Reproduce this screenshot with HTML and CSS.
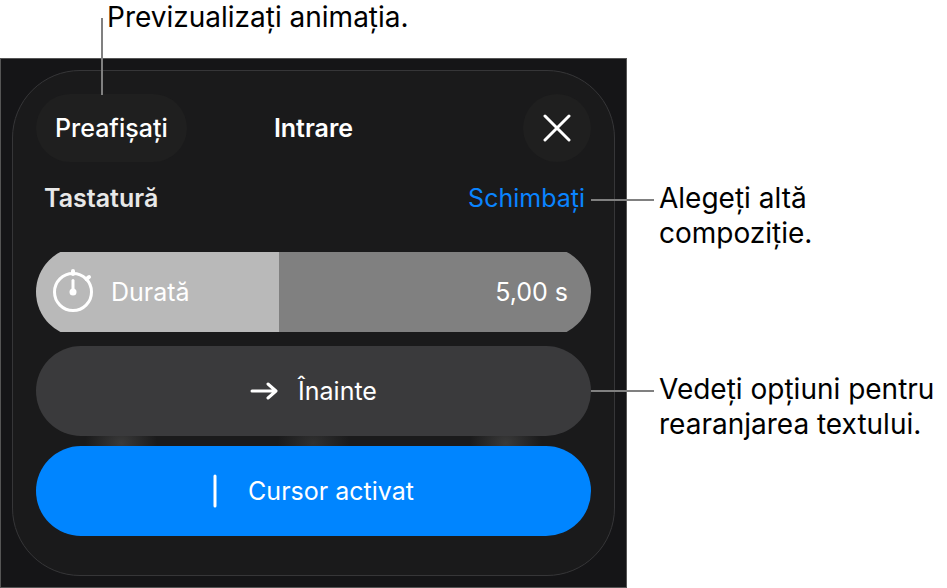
FILE: index.html
```html
<!DOCTYPE html>
<html lang="ro">
<head>
  <meta charset="UTF-8">
  <meta name="viewport" content="width=device-width, initial-scale=1.0">
  <title>Intrare</title>
  <link rel="stylesheet" href="styles.css">
</head>
<body>
  <div class="figure">
    <p class="callout callout-top">Previzualizați animația.</p>

    <div class="screen">
      <form class="panel">
        <div class="panel-header">
          <button type="button" class="preview">Preafișați</button>
          <h1>Intrare</h1>
          <button type="button" class="close" aria-label="Închideți">
            <svg width="28" height="28" viewBox="0 0 28 28">
              <path d="M2 2 L26 26 M26 2 L2 26" />
            </svg>
          </button>
        </div>

        <div class="effect">
          <h2>Tastatură</h2>
          <a href="#">Schimbați</a>
        </div>

        <div class="duration">
          <input type="range" id="duration" min="0" max="1000" value="437" style="--fill: 43.7%">
          <label for="duration">
            <svg width="42" height="48" viewBox="0 0 42 48">
              <circle cx="20" cy="24" r="18.500" />
              <path d="M20 12.500 V24" />
              <path class="knob" d="M20 3 V6 M33.500 11 L36 9" />
              <circle class="dot" cx="20" cy="24" r="3.500" />
            </svg>
            Durată
          </label>
          <output for="duration">5,00 s</output>
        </div>

        <button type="button" class="option">
          <svg width="28" height="20" viewBox="0 0 28 20">
            <path d="M2 10 H25 M18 3 L26 10 L18 17" />
          </svg>
          Înainte
        </button>

        <button type="button" class="option active">
          <svg width="4" height="34" viewBox="0 0 4 34">
            <path d="M2 2 V32" />
          </svg>
          Cursor activat
        </button>
      </form>
    </div>

    <div class="callouts">
      <p class="callout callout-side">Alegeți altă compoziție.</p>
      <p class="callout callout-side">Vedeți opțiuni pentru rearanjarea textului.</p>
    </div>
  </div>
</body>
</html>
```

FILE: styles.css
```css
* {
  box-sizing: border-box;
}
body {
  margin: 0;
  background: #fff;
  color: #000;
  font-family: Inter, "Liberation Sans", sans-serif;
}
h1, h2, p {
  margin: 0;
}
svg {
  flex: none;
  fill: none;
  stroke: #fff;
  stroke-width: 3;
  stroke-linecap: round;
  stroke-linejoin: round;
}

/* Picture and its callouts */
.figure {
  display: grid;
  grid-template-columns: minmax(0, 627px) minmax(0, 1fr);
}
.callout {
  position: relative;
  font-size: 28px;
  line-height: 35px;
}
.callout::before {
  content: "";
  position: absolute;
  background: #808080;
}
.callout-top {
  grid-column: 1 / -1;
  padding-left: 107px;
  padding-bottom: 23px;
}
.callout-top::before {
  left: 101px;
  top: 18px;
  width: 2px;
  height: 77px;
}
.callouts {
  display: flex;
  flex-direction: column;
  gap: 121px;
  padding-top: 123px;
  padding-left: 32px;
}
.callout-side::before {
  right: 100%;
  top: 18px;
  width: 63px;
  height: 2px;
  margin-right: 5px;
}

/* Dark screen */
.screen {
  padding: 11px;
  border: 1px solid #555;
  background: #151517;
}
.panel {
  display: flex;
  flex-direction: column;
  padding: 23px 23px 39px;
  border: 1px solid #363638;
  border-radius: 68px;
  background:
    radial-gradient(36px 30px at 18% 372px, #3a3a3a, transparent),
    radial-gradient(36px 30px at 50% 372px, #303030, transparent),
    radial-gradient(36px 30px at 82% 372px, #3a3a3a, transparent),
    #1a1a1b;
}
button {
  border: 0;
  padding: 0;
  color: #fff;
  font-family: inherit;
  font-size: 25px;
  cursor: pointer;
}
.panel-header {
  display: grid;
  grid-template-columns: 1fr auto 1fr;
  align-items: center;
}
.preview, .close {
  height: 68px;
  border-radius: 34px;
  background: #1f1f1f;
}
.preview {
  justify-self: start;
  padding: 0 19px;
  font-weight: 500;
}
.close {
  display: flex;
  align-items: center;
  justify-content: center;
  justify-self: end;
  width: 68px;
}
h1, h2 {
  color: #fff;
  font-size: 25px;
  font-weight: 600;
}
.effect {
  display: flex;
  align-items: center;
  justify-content: space-between;
  margin: 18px 0 36px;
  padding: 0 6px 0 8px;
  line-height: 36px;
}
.effect h2 {
  color: #e8e8e8;
}
.effect a {
  color: #0a84ff;
  font-size: 25px;
  text-decoration: none;
}

/* The track is taller than its row, so its round ends are cut off */
.duration {
  position: relative;
  display: flex;
  align-items: center;
  justify-content: space-between;
  height: 80px;
  margin-bottom: 14px;
  padding: 0 23px 0 17px;
  overflow: hidden;
  color: #fff;
  font-size: 25px;
}
.duration input {
  -webkit-appearance: none;
  appearance: none;
  position: absolute;
  inset: -5px 0;
  width: 100%;
  margin: 0;
  border-radius: 45px;
  background: linear-gradient(to right, #b9b9b9 var(--fill), #808080 var(--fill));
}
.duration input::-webkit-slider-thumb {
  -webkit-appearance: none;
  width: 1px;
  height: 80px;
}
.duration label, .duration output {
  position: relative;
  pointer-events: none;
}
.duration label {
  display: flex;
  align-items: center;
  gap: 16px;
}
.knob {
  stroke-width: 4;
}
.dot {
  fill: #fff;
  stroke: none;
}

.option {
  display: flex;
  align-items: center;
  justify-content: center;
  gap: 20px;
  height: 90px;
  border-radius: 45px;
  background: #3a3a3c;
}
.option.active {
  gap: 31px;
  margin-top: 10px;
  background: #0085ff;
}
```
